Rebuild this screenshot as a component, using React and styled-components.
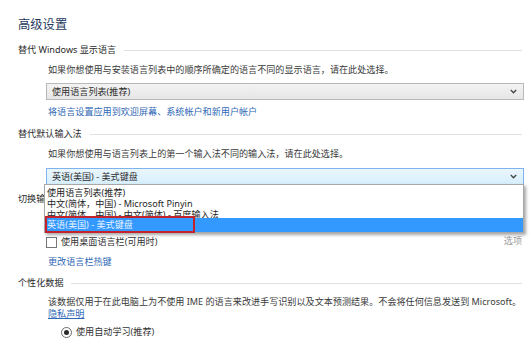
import React from "react";
import styled, { createGlobalStyle } from "styled-components";

const GlobalStyle = createGlobalStyle`
  html, body {
    margin: 0;
    padding: 0;
    background: #ffffff;
  }
  body {
    font-family: "Segoe UI", "Noto Sans", "Noto Sans CJK SC", sans-serif;
    color: #3a3a3a;
  }
`;

const Page = styled.div`
  width: 532px;
  height: 340px;
  box-sizing: border-box;
  padding: 17px 8px 0 18px;
  overflow: hidden;
  font-size: 9.1px;
  line-height: 12px;
`;

const Title = styled.h1`
  margin: 0;
  font-size: 12.3px;
  line-height: 16px;
  font-weight: normal;
  color: #24395c;
`;

const SectionHead = styled.div`
  display: flex;
  align-items: center;
  gap: 8px;
  margin-top: ${(p) => p.$top}px;
  height: 12px;
  color: #2a2a2a;
  padding-right: 2px;

  &::after {
    content: "";
    flex: 1;
    border-top: 1px solid #e0e0e0;
  }
`;

const Body = styled.div`
  padding-left: 28px;
`;

const Text = styled.p`
  margin: ${(p) => p.$top}px 0 0 2px;
  line-height: 12px;
  white-space: nowrap;
`;

const Link = styled.a`
  display: block;
  margin: ${(p) => p.$top || 0}px 0 0 2px;
  color: #2f68b5;
  text-decoration: ${(p) => (p.$underline ? "underline" : "none")};
  cursor: pointer;
  line-height: 12px;
`;

const Select = styled.div`
  margin-top: ${(p) => p.$top}px;
  height: 17px;
  box-sizing: border-box;
  display: flex;
  align-items: center;
  justify-content: space-between;
  padding: 0 6px 0 5px;
  border: 1px solid ${(p) => (p.$open ? "#7eb4ea" : "#b9b9b9")};
  background: ${(p) =>
    p.$open
      ? "linear-gradient(#eaf6fd, #d7effc)"
      : "linear-gradient(#f3f3f3, #e6e6e6)"};
  color: #2e2e2e;
`;

const Chevron = () => (
  <svg width="7" height="5" viewBox="0 0 7 5">
    <polyline
      points="0.8,1 3.5,3.8 6.2,1"
      fill="none"
      stroke="#444"
      strokeWidth="1.3"
    />
  </svg>
);

const SelectWrap = styled.div`
  position: relative;
`;

const DropList = styled.div`
  position: absolute;
  left: -2px;
  right: 0;
  top: 100%;
  margin-top: -1px;
  padding-top: 2px;
  background: #ffffff;
  border: 1px solid #a8a8a8;
  box-shadow: 2px 2px 3px rgba(0, 0, 0, 0.35);
  z-index: 5;
`;

const Option = styled.div`
  height: ${(p) => p.$h}px;
  line-height: ${(p) => (p.$active ? 14 : 11)}px;
  padding-left: 2px;
  background: ${(p) => (p.$active ? "#3399ff" : "transparent")};
  color: ${(p) => (p.$active ? "#eaf4ff" : "#1e1e1e")};
  overflow: hidden;
  white-space: nowrap;
`;

const Marker = styled.div`
  position: absolute;
  left: 0;
  bottom: -1px;
  width: 150px;
  height: 17px;
  box-sizing: border-box;
  border: 2px solid #c4232c;
  pointer-events: none;
`;

const CheckRow = styled.div`
  display: flex;
  align-items: center;
  justify-content: space-between;
  margin-top: ${(p) => p.$top}px;
  height: 12px;
`;

const CheckLabel = styled.label`
  display: flex;
  align-items: center;
  gap: 4px;
  color: #333;
`;

const Box = styled.span`
  width: 9px;
  height: 9px;
  border: 1px solid #777;
  background: #fff;
`;

const Options = styled.span`
  color: #9a9a9a;
  margin-right: 2px;
  margin-top: -3px;
`;

const RadioRow = styled.label`
  display: flex;
  align-items: center;
  gap: 4px;
  margin: ${(p) => p.$top}px 0 0 15px;
  color: #333;
`;

const Radio = styled.span`
  width: 9px;
  height: 9px;
  border-radius: 50%;
  border: 1px solid #6a6a6a;
  display: flex;
  align-items: center;
  justify-content: center;

  &::after {
    content: "";
    width: 5px;
    height: 5px;
    border-radius: 50%;
    background: #2a2a2a;
  }
`;

const options = [
  { label: "使用语言列表(推荐)", h: 11 },
  { label: "中文(简体，中国) - Microsoft Pinyin", h: 11 },
  { label: "中文(简体，中国) - 中文(简体) - 百度输入法", h: 9 },
];

export default function App() {
  return (
    <Page>
      <GlobalStyle />
      <Title>高级设置</Title>

      <SectionHead $top={11}>替代 Windows 显示语言</SectionHead>
      <Body>
        <Text $top={8}>
          如果你想使用与安装语言列表中的顺序所确定的语言不同的显示语言，请在此处选择。
        </Text>
        <Select $top={7}>
          <span>使用语言列表(推荐)</span>
          <Chevron />
        </Select>
        <Link $top={6}>将语言设置应用到欢迎屏幕、系统帐户和新用户帐户</Link>
      </Body>

      <SectionHead $top={10}>替代默认输入法</SectionHead>
      <Body>
        <Text $top={8}>
          如果你想使用与语言列表上的第一个输入法不同的输入法，请在此处选择。
        </Text>
        <SelectWrap>
          <Select $top={8} $open>
            <span>英语(美国) - 美式键盘</span>
            <Chevron />
          </Select>
          <DropList>
            {options.map((o) => (
              <Option key={o.label} $h={o.h}>
                {o.label}
              </Option>
            ))}
            <Option $active $h={14}>
              英语(美国) - 美式键盘
            </Option>
            <Marker />
          </DropList>
        </SelectWrap>
      </Body>

      <SectionHead $top={8}>切换输入法</SectionHead>
      <Body>
        <CheckRow $top={31}>
          <CheckLabel>
            <Box />
            使用桌面语言栏(可用时)
          </CheckLabel>
          <Options>选项</Options>
        </CheckRow>
        <Link $top={8}>更改语言栏热键</Link>
      </Body>

      <SectionHead $top={9}>个性化数据</SectionHead>
      <Body>
        <Text $top={7}>
          该数据仅用于在此电脑上为不使用 IME 的语言来改进手写识别以及文本预测结果。不会将任何信息发送到 Microsoft。
        </Text>
        <Link $underline>隐私声明</Link>
        <RadioRow $top={6}>
          <Radio />
          使用自动学习(推荐)
        </RadioRow>
      </Body>
    </Page>
  );
}
